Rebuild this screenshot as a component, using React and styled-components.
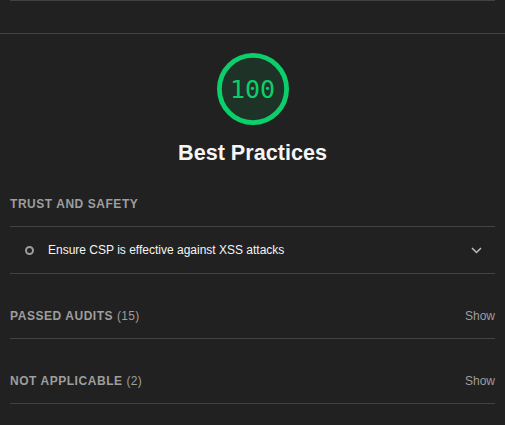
import React from 'react'
import styled, { createGlobalStyle } from 'styled-components'

const GlobalStyle = createGlobalStyle`
  html, body {
    margin: 0;
    background: #212121;
  }
  body {
    font-family: "Liberation Sans", Arial, sans-serif;
    color: #f5f5f5;
  }
`

const groups = [
  { title: 'Passed audits', count: 15 },
  { title: 'Not applicable', count: 2 },
]

const Page = styled.div`
  width: 505px;
  height: 425px;
  overflow: hidden;
`

const PrevSection = styled.div`
  margin: 0 10px;
  border-top: 1px solid #424242;
  height: 32px;
`

const Category = styled.section`
  border-top: 1px solid #424242;
  padding-top: 19px;
`

const GaugeWrap = styled.div`
  display: flex;
  justify-content: center;
`

const Gauge = styled.div`
  position: relative;
  width: 72px;
  height: 72px;
`

const GaugeValue = styled.div`
  position: absolute;
  inset: 0;
  display: flex;
  align-items: center;
  justify-content: center;
  font-family: "DejaVu Sans Mono", "Liberation Mono", monospace;
  font-size: 25px;
  color: #0cce6b;
  padding-top: 1px;
`

const Title = styled.h2`
  margin: 16px 0 0;
  text-align: center;
  font-size: 21.6px;
  line-height: 24px;
  font-weight: bold;
  color: #f5f5f5;
`

const GroupHeader = styled.div`
  margin: 0 10px;
  padding: ${p => (p.$first ? '31px' : '34px')} 0 14px;
  display: flex;
  justify-content: space-between;
  align-items: center;
  border-bottom: 1px solid #424242;
  font-size: 12px;
  line-height: 16px;
`

const GroupTitle = styled.span`
  text-transform: uppercase;
  font-weight: bold;
  letter-spacing: 0.55px;
  color: #9e9e9e;
`

const Count = styled.span`
  font-weight: normal;
  letter-spacing: 0.3px;
`

const ShowLink = styled.span`
  color: #9e9e9e;
  font-size: 12px;
`

const AuditRow = styled.div`
  margin: 0 10px;
  height: 46px;
  display: flex;
  align-items: center;
  border-bottom: 1px solid #424242;
  padding: 0 13px 0 15px;
  font-size: 12px;
  color: #f5f5f5;
`

const Marker = styled.span`
  width: 5px;
  height: 5px;
  border: 2px solid #9e9e9e;
  border-radius: 50%;
  margin-right: 14px;
`

const AuditText = styled.span`
  flex: 1;
`

const App = () => {
  return (
    <Page>
      <GlobalStyle />
      <PrevSection />
      <Category>
        <GaugeWrap>
          <Gauge>
            <svg width="72" height="72" viewBox="0 0 120 120">
              <circle cx="60" cy="60" r="56" fill="rgba(12,206,107,0.1)" stroke="#0cce6b" strokeWidth="8" />
            </svg>
            <GaugeValue>100</GaugeValue>
          </Gauge>
        </GaugeWrap>
        <Title>Best Practices</Title>

        <GroupHeader $first>
          <GroupTitle>Trust and Safety</GroupTitle>
        </GroupHeader>
        <AuditRow>
          <Marker />
          <AuditText>Ensure CSP is effective against XSS attacks</AuditText>
          <svg width="11" height="7" viewBox="0 0 11 7">
            <path d="M1 1l4.5 4.5L10 1" fill="none" stroke="#bdbdbd" strokeWidth="1.5" />
          </svg>
        </AuditRow>

        {groups.map(g => (
          <GroupHeader key={g.title}>
            <GroupTitle>
              {g.title} <Count>({g.count})</Count>
            </GroupTitle>
            <ShowLink>Show</ShowLink>
          </GroupHeader>
        ))}
      </Category>
    </Page>
  )
}

export default App
